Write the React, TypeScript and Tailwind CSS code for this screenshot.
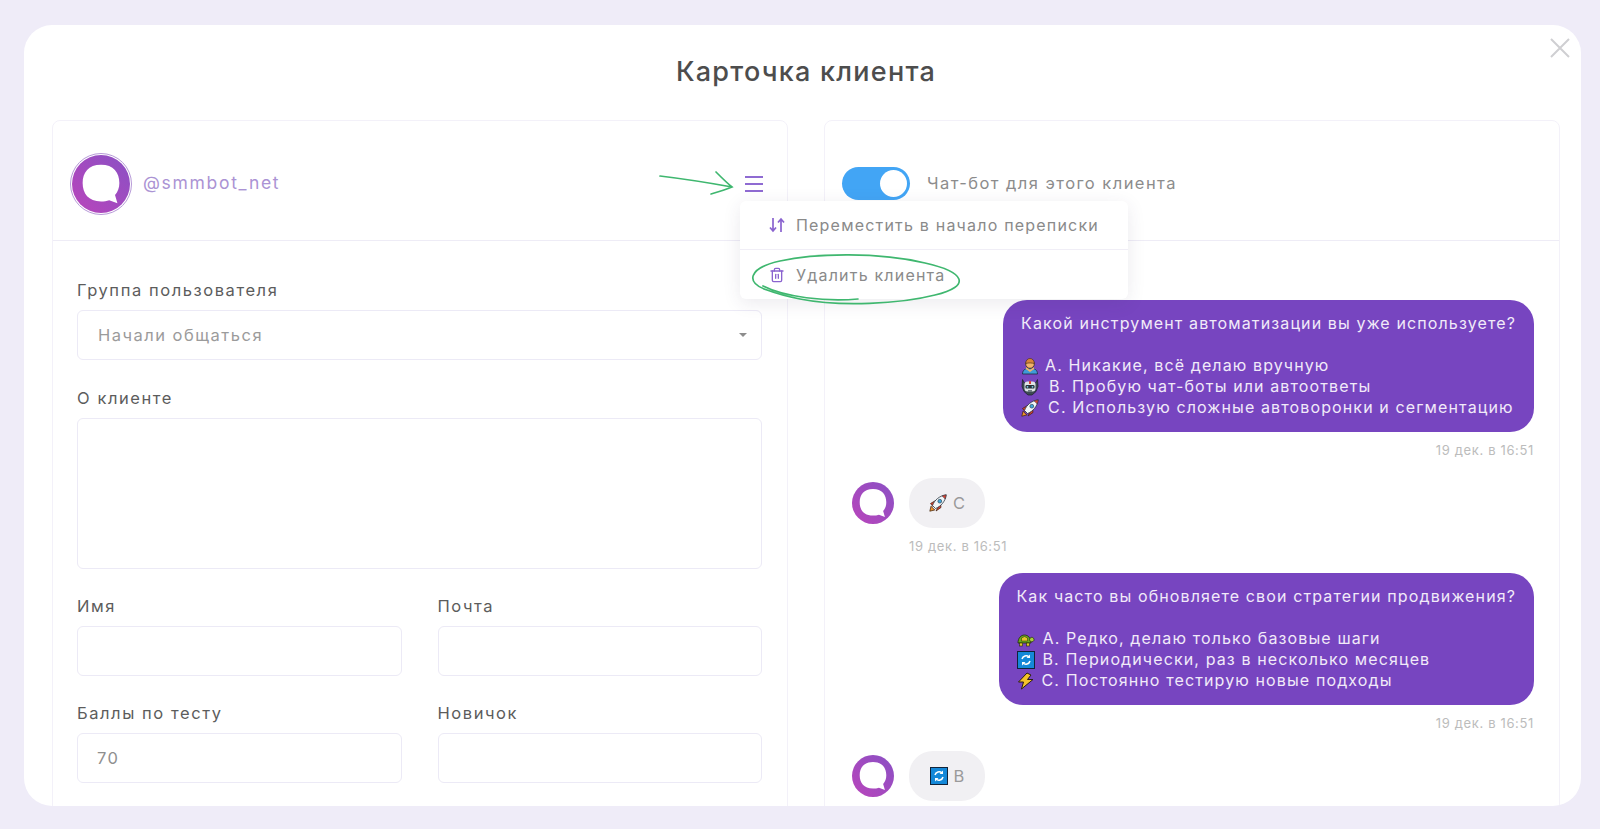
import { Trash2 } from "lucide-react";
import type { ReactNode } from "react";

const font = { fontFamily: "Inter, 'Noto Sans', sans-serif" };

function Logo({ size, id }: { size: number; id: string }) {
  return (
    <svg width={size} height={size} viewBox="0 0 60 60" className="shrink-0">
      <defs>
        <linearGradient id={id} x1="0" y1="1" x2="1" y2="0">
          <stop offset="0" stopColor="#b945bb" />
          <stop offset="1" stopColor="#8a50c4" />
        </linearGradient>
      </defs>
      <circle cx="30" cy="30" r="30" fill={`url(#${id})`} />
      <path
        d="M30 10C17 10 11 18 11 29s6 19 19 19c3 0 6-.4 8.500-1.300L47 50l-2.500-8.500C47.500 38 49 34 49 29 49 18 43 10 30 10z"
        fill="#fff"
      />
    </svg>
  );
}

/* small hand-drawn emoji set for the quiz answers */
function Person() {
  return (
    <svg width="18" height="18" viewBox="0 0 18 18">
      <path d="M1.500 17c0-4 3-6 7.500-6s7.500 2 7.500 6z" fill="#3f9bd8" stroke="#1c2b3a" strokeWidth=".8" />
      <circle cx="9" cy="7" r="4.300" fill="#f2b36b" stroke="#3a2a1a" strokeWidth=".8" />
      <path d="M4.700 6.500C4.700 3 7 1.500 9 1.500s4.300 1.500 4.300 5C11 6 8 5.500 4.700 6.500z" fill="#d9843b" stroke="#3a2a1a" strokeWidth=".6" />
      <path d="M5 11l4 3 4-3" fill="none" stroke="#f2b36b" strokeWidth="1.600" />
    </svg>
  );
}

function Robot() {
  return (
    <svg width="18" height="18" viewBox="0 0 18 18">
      <path d="M1.500 1.500L3.500 5h11l2-3.500.5 7-2 5L11 17H7l-4-3.500-2-5z" fill="#3c4a52" stroke="#1a1f24" strokeWidth=".7" />
      <rect x="3.500" y="3.500" width="11" height="10" rx="3" fill="#dfe4e6" />
      <rect x="8" y="3" width="2" height="3" fill="#d8453a" />
      <rect x="4.500" y="7" width="9" height="3.600" rx="1.200" fill="#27323a" />
      <circle cx="6.500" cy="8.800" r=".9" fill="#7fd0e8" />
      <circle cx="11.500" cy="8.800" r=".9" fill="#7fd0e8" />
      <rect x="7" y="12" width="4" height="2" fill="#6d7b83" />
    </svg>
  );
}

function Rocket() {
  return (
    <svg width="18" height="18" viewBox="0 0 18 18">
      <path d="M.8 17.200l1.200-5 3.800 3.800z" fill="#f0932b" stroke="#3a1f10" strokeWidth=".7" />
      <path d="M1.500 9.500L6.500 6.500 4 12.500zM8.500 14l3-5 .5 4.500-5 3.500z" fill="#d8402f" stroke="#3a1f10" strokeWidth=".7" />
      <path d="M3.500 11.500C5.500 6 10.500 1.800 17.200.8 16.500 7 12 12.500 6.500 14.500z" fill="#f2f6f8" stroke="#2b3640" strokeWidth=".8" />
      <path d="M13 1.800l4.200-1-.9 4.300z" fill="#d8402f" stroke="#2b3640" strokeWidth=".5" />
      <circle cx="10.800" cy="7.200" r="1.900" fill="#3fa7dc" stroke="#2b3640" strokeWidth=".6" />
    </svg>
  );
}

function Turtle() {
  return (
    <svg width="18" height="18" viewBox="0 0 18 18">
      <path d="M1 13c0-5 3-8 6.500-8s6.500 3 6.500 8z" fill="#6aa81f" stroke="#1f2a0a" strokeWidth=".8" />
      <path d="M4.500 8l3-1.500 3 1.500v3h-6z" fill="#e3c52a" stroke="#1f2a0a" strokeWidth=".5" />
      <path d="M12.500 9.500c.5-2 2-2.500 3.200-2 1.500.6 1.800 3 .5 3.800-1 .6-2.200.5-3 .2z" fill="#a8cf3a" stroke="#1f2a0a" strokeWidth=".7" />
      <rect x="2.500" y="13" width="3" height="3" fill="#e3c52a" stroke="#1f2a0a" strokeWidth=".6" />
      <rect x="9.500" y="13" width="3" height="3" fill="#e3c52a" stroke="#1f2a0a" strokeWidth=".6" />
    </svg>
  );
}

function Repeat() {
  return (
    <svg width="18" height="18" viewBox="0 0 18 18">
      <rect x=".5" y=".5" width="17" height="17" fill="#1488d8" stroke="#10233a" />
      <path d="M5 8a4.200 4.200 0 0 1 7-2M13 10a4.200 4.200 0 0 1-7 2" fill="none" stroke="#fff" strokeWidth="1.500" />
      <path d="M13 3.500v3.500h-3.500zM5 14.500V11h3.500z" fill="#fff" />
    </svg>
  );
}

function Bolt() {
  return (
    <svg width="18" height="18" viewBox="0 0 18 18">
      <path d="M10 1L1.500 10h5L4.500 17 16 7.500h-5.500L14 3z" fill="#f4c22b" stroke="#2b2010" strokeWidth="1" strokeLinejoin="round" />
    </svg>
  );
}

function Field({ label, value, className }: { label: string; value?: string; className?: string }) {
  return (
    <div className={className}>
      <div className="text-[16.500px] leading-[20px] tracking-[0.095em] text-[#5c5c5c]">{label}</div>
      <div className="mt-[10px] flex h-[50px] items-center rounded-md border border-[#eceaf6] bg-white px-[19px] text-[16.500px] tracking-[0.09em] text-[#8f8f8f]">
        {value}
      </div>
    </div>
  );
}

function AnswerLine({ icon, gap, children }: { icon: ReactNode; gap: string; children: ReactNode }) {
  return (
    <div className={`flex items-center ${gap}`}>
      {icon}
      <span>{children}</span>
    </div>
  );
}

function OutgoingBubble({
  question,
  answers,
  time,
}: {
  question: string;
  answers: { icon: ReactNode; text: string; gap: string }[];
  time: string;
}) {
  return (
    <div className="flex flex-col items-end">
      <div className="rounded-[24px] bg-[#7745c0] pb-[14px] pl-[18px] pr-[18px] pt-[13px] text-[16px] leading-[21px] tracking-[0.07em] text-[#f1eaf9]">
        <div>{question}</div>
        <div className="h-[21px]" />
        {answers.map((a) => (
          <AnswerLine key={a.text} icon={a.icon} gap={a.gap}>
            {a.text}
          </AnswerLine>
        ))}
      </div>
      <div className="mt-[10px] text-[13px] leading-[16px] tracking-[0.05em] text-[#bcbcbc]">{time}</div>
    </div>
  );
}

function IncomingBubble({ icon, text, id, time }: { icon: ReactNode; text: string; id: string; time?: string }) {
  return (
    <div className="flex items-start gap-[15px]">
      <div className="pt-[4px]">
        <Logo size={42} id={id} />
      </div>
      <div>
        <div className="flex h-[50px] w-[76px] items-center justify-center gap-[6px] rounded-[24px] bg-[#f1f0f3] text-[16.500px] text-[#9a9a9a]">
          {icon}
          <span>{text}</span>
        </div>
        {time && <div className="mt-[10px] text-[13px] leading-[16px] tracking-[0.05em] text-[#bcbcbc]">{time}</div>}
      </div>
    </div>
  );
}

export default function App() {
  return (
    <div className="relative h-[829px] overflow-hidden bg-[#efecf8] pl-[24px] pt-[25px]" style={font}>
      <div className="relative h-[781px] w-[1557px] overflow-hidden rounded-[28px] bg-white pl-[28px] pr-[21px]">
        <svg width="20" height="20" viewBox="0 0 20 20" className="absolute right-[11px] top-[13px]">
          <path d="M1 1l18 18M19 1L1 19" stroke="#cfcfd2" strokeWidth="2" />
        </svg>

        <h1 className="h-[95px] pt-[29px] text-center text-[27px] font-medium leading-[36px] tracking-[0.046em] text-[#4d4d4d]">
          Карточка клиента
        </h1>

        <div className="grid grid-cols-2 gap-[36px]">
          {/* client profile */}
          <section className="h-[700px] rounded-t-lg border border-[#f3f1f9]">
            <div className="flex h-[120px] items-center border-b border-[#eeecf6] pl-[17px] pr-[24px] pt-[6px]">
              <div className="rounded-full border border-[#b79ad8] p-px">
                <Logo size={58} id="logo-main" />
              </div>
              <span className="ml-[11px] text-[17.500px] tracking-[0.097em] text-[#ab93d4]">@smmbot_net</span>
              <svg width="18" height="16" viewBox="0 0 18 16" className="ml-auto">
                <path d="M0 1h18M0 8h18M0 15h18" stroke="#8f6bd2" strokeWidth="2" />
              </svg>
            </div>

            <div className="pl-[24px] pr-[25px] pt-[39px]">
              <div className="text-[16.500px] leading-[20px] tracking-[0.095em] text-[#5c5c5c]">Группа пользователя</div>
              <div className="mt-[10px] flex h-[50px] items-center justify-between rounded-md border border-[#eceaf6] pl-[20px] pr-[14px] text-[16.500px] tracking-[0.09em] text-[#9b9b9b]">
                Начали общаться
                <span className="h-0 w-0 border-x-[4px] border-t-[4px] border-x-transparent border-t-[#8d8d8d]" />
              </div>

              <div className="mt-[28px] text-[16.500px] leading-[20px] tracking-[0.095em] text-[#5c5c5c]">О клиенте</div>
              <div className="mt-[10px] h-[151px] rounded-md border border-[#eceaf6]" />

              <div className="mt-[27px] grid grid-cols-2 gap-x-[36px] gap-y-[27px]">
                <Field label="Имя" />
                <Field label="Почта" />
                <Field label="Баллы по тесту" value="70" />
                <Field label="Новичок" />
              </div>
            </div>
          </section>

          {/* chat with the client */}
          <section className="h-[700px] rounded-t-lg border border-[#f3f1f9]">
            <div className="flex h-[120px] items-center gap-[17px] border-b border-[#eeecf6] pl-[17px] pt-[6px]">
              <div className="flex h-[33px] w-[68px] items-center justify-end rounded-full bg-[#42a5f5] pr-[3px]">
                <span className="h-[27px] w-[27px] rounded-full bg-white" />
              </div>
              <span className="text-[16.500px] tracking-[0.088em] text-[#8c8c8c]">Чат-бот для этого клиента</span>
            </div>

            <div className="flex flex-col pl-[27px] pr-[25px] pt-[59px]">
              <OutgoingBubble
                question="Какой инструмент автоматизации вы уже используете?"
                time="19 дек. в 16:51"
                answers={[
                  { icon: <Person />, text: "А. Никакие, всё делаю вручную", gap: "gap-[6px]" },
                  { icon: <Robot />, text: "В. Пробую чат-боты или автоответы", gap: "gap-[10px]" },
                  { icon: <Rocket />, text: "С. Использую сложные автоворонки и сегментацию", gap: "gap-[9px]" },
                ]}
              />
              <div className="mt-[20px]">
                <IncomingBubble icon={<Rocket />} text="С" id="logo-a" time="19 дек. в 16:51" />
              </div>
              <div className="mt-[19px]">
                <OutgoingBubble
                  question="Как часто вы обновляете свои стратегии продвижения?"
                  time="19 дек. в 16:51"
                  answers={[
                    { icon: <Turtle />, text: "А. Редко, делаю только базовые шаги", gap: "gap-[8px]" },
                    { icon: <Repeat />, text: "В. Периодически, раз в несколько месяцев", gap: "gap-[8px]" },
                    { icon: <Bolt />, text: "С. Постоянно тестирую новые подходы", gap: "gap-[7px]" },
                  ]}
                />
              </div>
              <div className="mt-[20px]">
                <IncomingBubble icon={<Repeat />} text="В" id="logo-b" />
              </div>
            </div>
          </section>
        </div>
      </div>

      {/* client actions menu */}
      <div className="absolute left-[740px] top-[201px] w-[388px] rounded-md bg-white text-[16px] tracking-[0.075em] text-[#8a8a8a] shadow-[0_4px_18px_rgba(60,50,90,0.1)]">
        <div className="flex h-[49px] items-center gap-[11px] border-b border-[#f0eef6] pl-[29px]">
          <svg width="16" height="16" viewBox="0 0 16 16" fill="none" stroke="#8a63cf" strokeWidth="1.700">
            <path d="M4 1v13M1 10.500L4 14l3-3.500M12 15V2M9 5.500L12 2l3 3.500" />
          </svg>
          Переместить в начало переписки
        </div>
        <div className="flex h-[49px] items-center gap-[11px] pl-[29px]">
          <Trash2 size={16} color="#8a63cf" />
          Удалить клиента
        </div>
      </div>

      {/* green marker annotations */}
      <svg width="1600" height="829" className="pointer-events-none absolute left-0 top-0" fill="none" stroke="#3fb76f" strokeWidth="1.700" strokeLinecap="round">
        <path d="M660 176C685 179 710 183 732 187M716 172C722 178 727 183 732 187C725 190 718 192 711 194" />
        <path d="M858 299C825 302 785 297 763 286M767 290C745 283 748 268 780 261C815 253 880 252 925 263C965 272 972 286 935 295C900 304 840 307 800 299C785 296 775 293 767 290" />
      </svg>
    </div>
  );
}
